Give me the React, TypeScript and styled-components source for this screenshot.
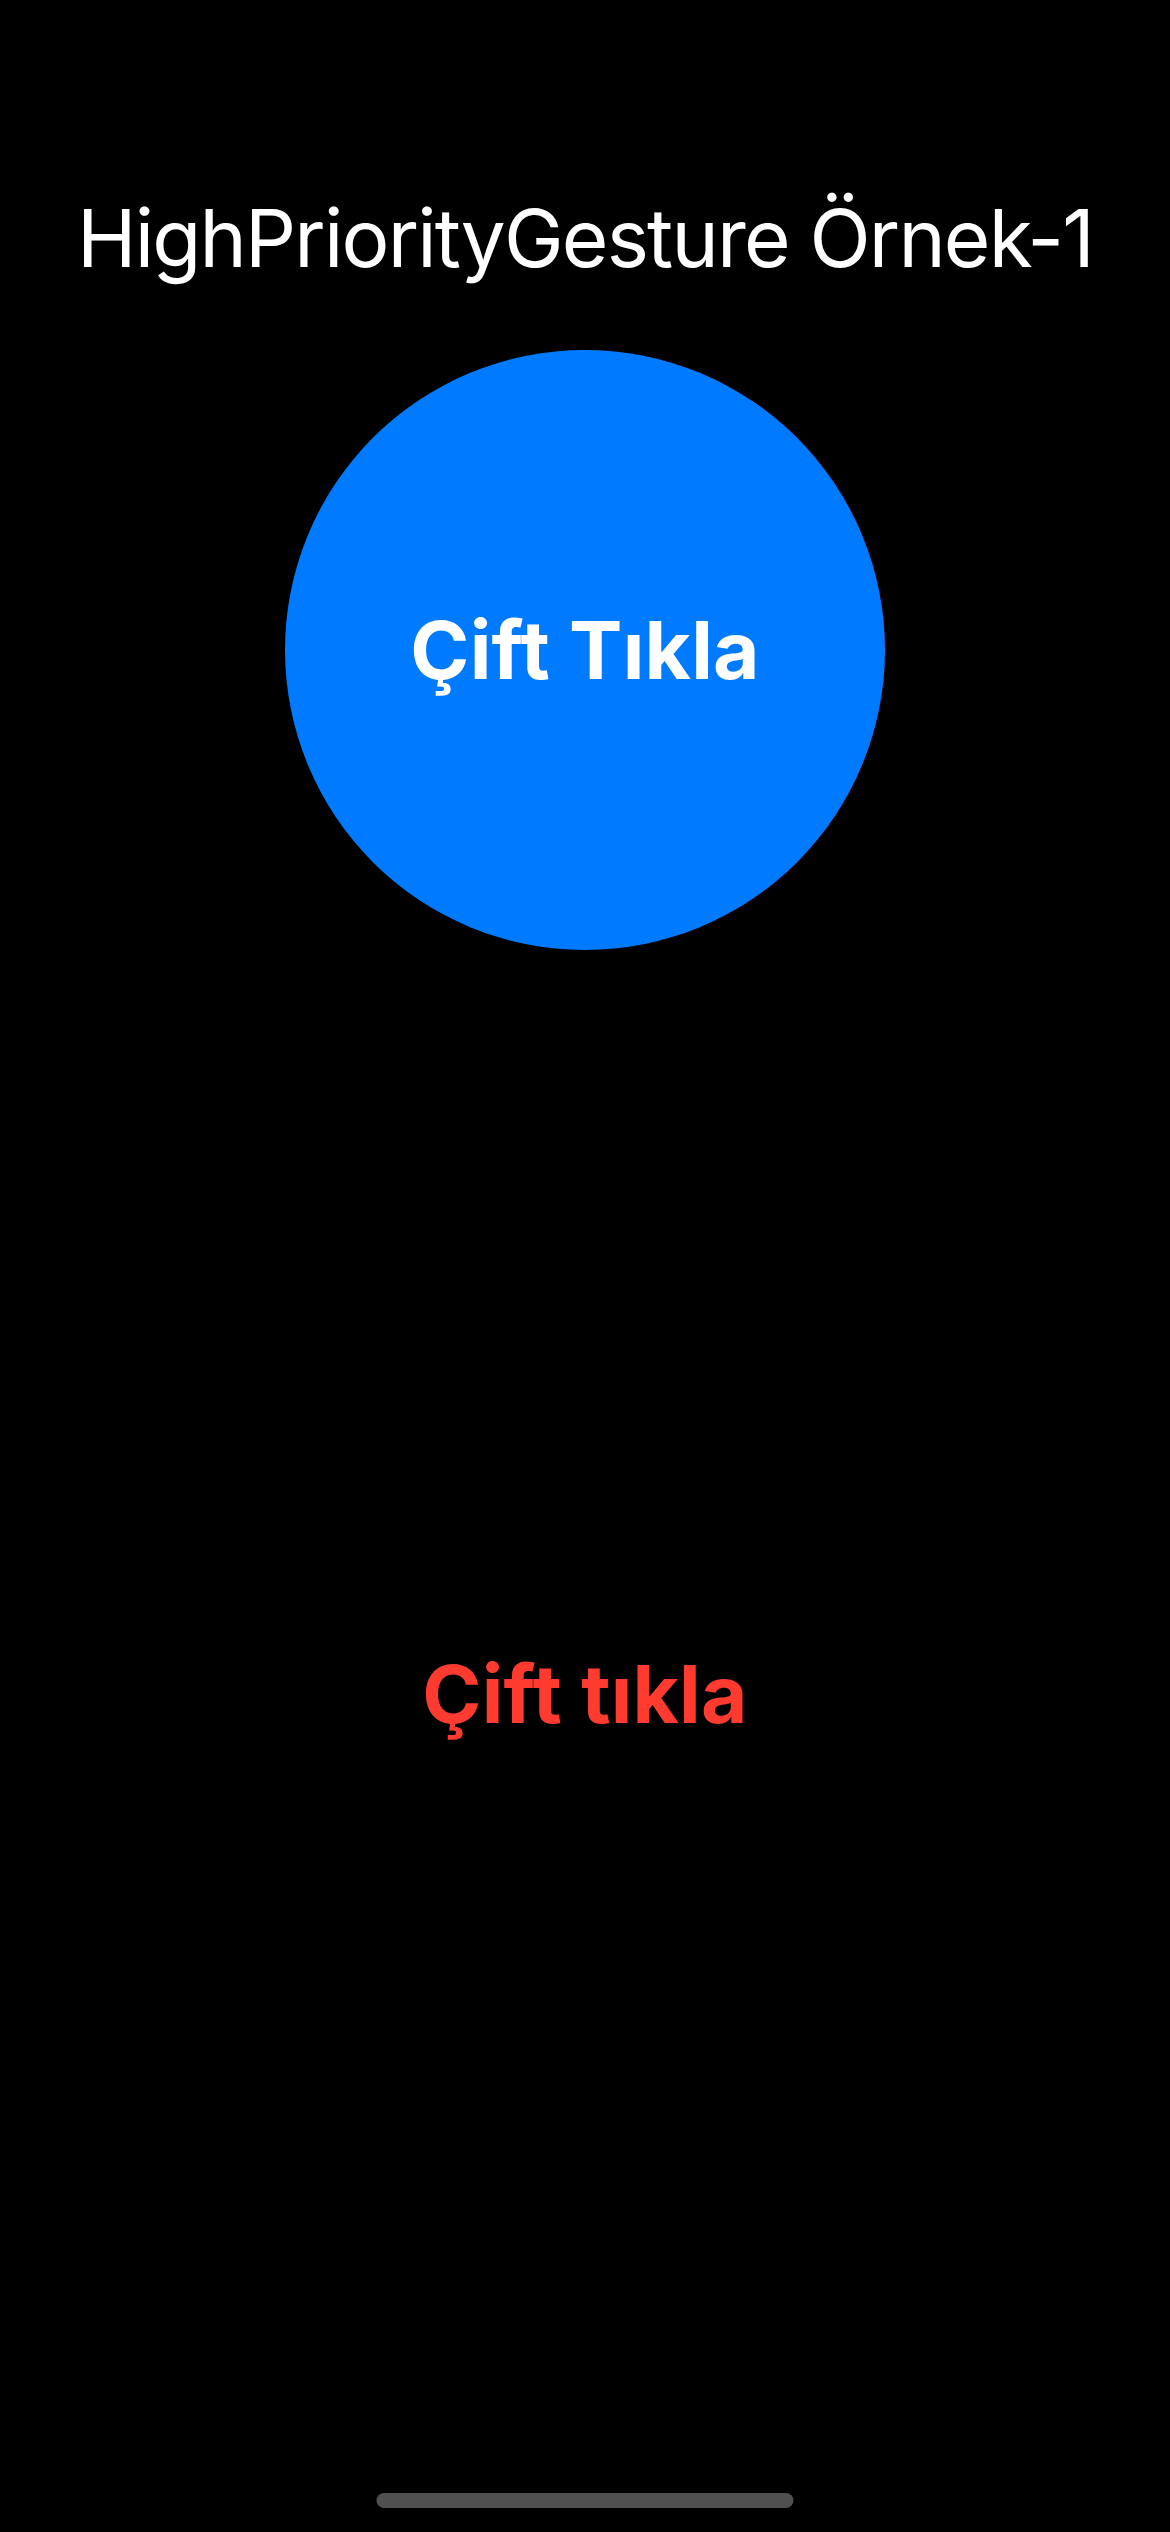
import React from 'react';
import styled, { createGlobalStyle } from 'styled-components';

const GlobalStyle = createGlobalStyle`
  html, body {
    margin: 0;
    padding: 0;
    background: #000;
  }
  body {
    font-family: Inter, 'Noto Sans', 'Liberation Sans', sans-serif;
    -webkit-font-smoothing: antialiased;
  }
`;

const Screen = styled.main`
  position: relative;
  width: 1170px;
  height: 2532px;
  background: #000;
  display: flex;
  flex-direction: column;
  align-items: center;
  padding-top: 188px;
  box-sizing: border-box;
  overflow: hidden;
`;

const Title = styled.h1`
  margin: 0;
  font-size: 80px;
  line-height: 100px;
  font-weight: 400;
  color: #fff;
  letter-spacing: -1.8px;
  white-space: nowrap;
`;

const Circle = styled.button`
  margin-top: 62px;
  width: 600px;
  height: 600px;
  border-radius: 50%;
  border: none;
  padding: 0;
  background: #007aff;
  display: flex;
  align-items: center;
  justify-content: center;
  font-family: inherit;
  cursor: pointer;
`;

const Label = styled.span<{ $color: string }>`
  font-size: 80px;
  line-height: 100px;
  font-weight: 700;
  color: ${({ $color }) => $color};
  letter-spacing: 0.2px;
  white-space: nowrap;
`;

const Status = styled(Label)`
  margin-top: 694px;
`;

const HomeIndicator = styled.div`
  position: absolute;
  left: 50%;
  bottom: 24px;
  transform: translateX(-50%);
  width: 417px;
  height: 15px;
  border-radius: 8px;
  background: #505050;
`;

const App: React.FC = () => (
  <>
    <GlobalStyle />
    <Screen>
      <Title>HighPriorityGesture Örnek-1</Title>
      <Circle>
        <Label $color="#fff">Çift Tıkla</Label>
      </Circle>
      <Status $color="#ff3b30">Çift tıkla</Status>
      <HomeIndicator />
    </Screen>
  </>
);

export default App;
